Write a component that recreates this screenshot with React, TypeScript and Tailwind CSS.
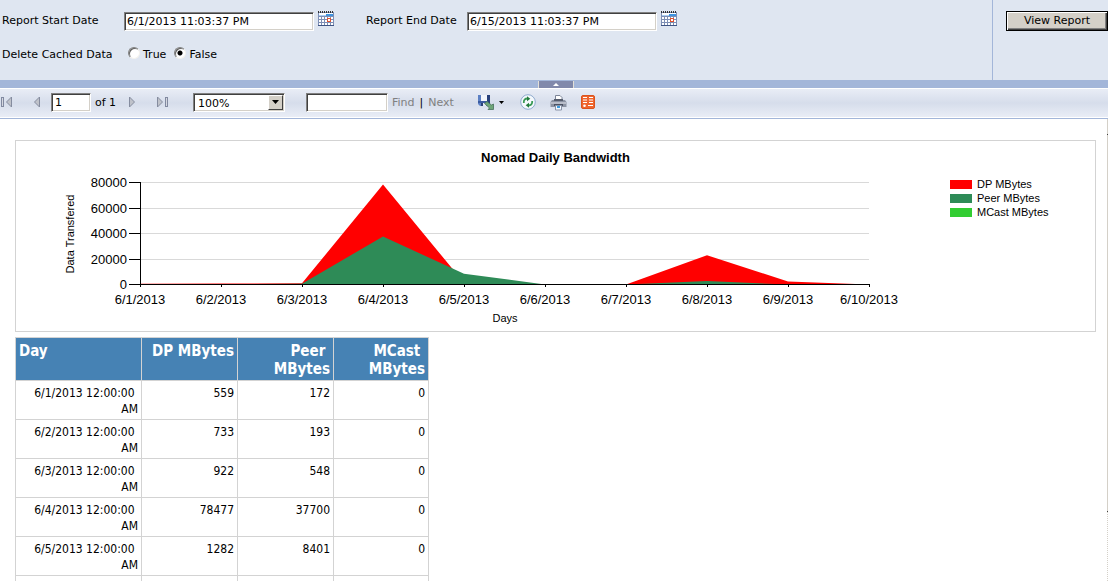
import type { ReactNode } from "react";

const SUNKEN =
  "bg-white border border-t-[#808080] border-l-[#808080] border-r-white border-b-white shadow-[inset_1px_1px_0_#404040,inset_-1px_-1px_0_#d4d0c8] rounded-none outline-none";

const rows = [
  { day: "6/1/2013 12:00:00 AM", dp: 559, peer: 172, mcast: 0 },
  { day: "6/2/2013 12:00:00 AM", dp: 733, peer: 193, mcast: 0 },
  { day: "6/3/2013 12:00:00 AM", dp: 922, peer: 548, mcast: 0 },
  { day: "6/4/2013 12:00:00 AM", dp: 78477, peer: 37700, mcast: 0 },
  { day: "6/5/2013 12:00:00 AM", dp: 1282, peer: 8401, mcast: 0 },
];

const series = {
  dp: [559, 733, 922, 78477, 1282, 0, 0, 23000, 2300, 0],
  peer: [172, 193, 548, 37700, 8401, 0, 0, 2700, 0, 0],
};

const legend = [
  { label: "DP MBytes", color: "bg-[#ff0000]" },
  { label: "Peer MBytes", color: "bg-[#2e8b57]" },
  { label: "MCast MBytes", color: "bg-[#32cd32]" },
];

function CalendarIcon() {
  return (
    <svg width="16" height="16" viewBox="0 0 16 16" shapeRendering="crispEdges">
      <rect x="0" y="1" width="16" height="14" fill="#7e8fb5" />
      <rect x="1" y="2" width="14" height="3" fill="#ffffff" />
      <rect x="1" y="4" width="7" height="1" fill="#a9cdf2" />
      <rect x="8" y="3" width="7" height="2" fill="#3f94e0" />
      {[6, 9, 12].map((y) =>
        [1, 4, 7, 10, 13].map((x) => <rect key={`${x}-${y}`} x={x} y={y} width="2" height="2" fill="#ffffff" />)
      )}
      <rect x="9" y="7" width="4" height="4" fill="#e0522f" />
      <rect x="10" y="8" width="2" height="2" fill="#ffffff" />
      {[0, 2, 4, 6, 8, 10, 12, 14].map((x) => (
        <rect key={x} x={x} y="0" width="1" height="2" fill="#333333" />
      ))}
      <rect x="0" y="14" width="16" height="1" fill="#3f5484" />
    </svg>
  );
}

function PageArrow({ flip = false, bar = false }: { flip?: boolean; bar?: boolean }) {
  return (
    <svg width="12" height="12" viewBox="0 0 12 12" className={flip ? "-scale-x-100" : ""}>
      {bar && <rect x="1.5" y="1.5" width="2" height="9" fill="#d5d8e0" stroke="#8189a0" strokeWidth="1" />}
      <path d="M11.5 1 V11 L6.500 6 Z" fill="#bfc2ca" stroke="#858c9f" strokeWidth="1" />
    </svg>
  );
}

function SaveIcon() {
  return (
    <svg width="17" height="17" viewBox="0 0 17 17">
      <path d="M0 1 H12 V12 H2 L0 10 Z" fill="#5c80c4" />
      <rect x="3" y="1" width="6" height="6" fill="#f3f6fc" />
      <rect x="9" y="1" width="3" height="9" fill="#27407c" />
      <rect x="0" y="7" width="10" height="2" fill="#3a5a9f" />
      <rect x="3" y="9" width="5" height="3" fill="#e3e8f2" />
      <rect x="3" y="9" width="2" height="3" fill="#2b4277" />
      <path d="M6.500 9.500 L9 7.500 L13.500 11 L15.500 10 V15.500 H10 L11.500 14 Z" fill="#6ea678" stroke="#47705c" strokeWidth="0.8" />
    </svg>
  );
}

function RefreshIcon() {
  return (
    <svg width="16" height="16" viewBox="0 0 16 16">
      <circle cx="8" cy="8" r="7.300" fill="#f4f8fc" stroke="#8fabcf" />
      <path d="M3.800 9 C3.500 6 5 4.500 7.500 4.500" fill="none" stroke="#3a9a56" strokeWidth="1.800" />
      <path d="M7 2.300 L10.300 4.800 L7 7.200 Z" fill="#237a3c" />
      <path d="M12.200 7 C12.500 10 11 11.500 8.500 11.500" fill="none" stroke="#3a9a56" strokeWidth="1.800" />
      <path d="M9 13.700 L5.700 11.200 L9 8.800 Z" fill="#237a3c" />
    </svg>
  );
}

function PrintIcon() {
  return (
    <svg width="17" height="17" viewBox="0 0 17 17">
      <path d="M5.500 6 V1.500 H10 L12 3.500 V6" fill="#ffffff" stroke="#7c8598" />
      <path d="M2 6 H15 L16.500 8 V13 H0.500 V8 Z" fill="#8c93a3" />
      <rect x="4" y="5" width="9" height="2" fill="#555c6c" />
      <rect x="1" y="8" width="15" height="2" fill="#b9bdc9" />
      <rect x="4" y="10" width="9" height="2" fill="#4c5262" />
      <path d="M5.500 11.500 H11.500 V16 H5.500 Z" fill="#f5f9ff" stroke="#8a94a8" />
      <rect x="7" y="12" width="3" height="2" fill="#3f9bdc" />
    </svg>
  );
}

function FeedIcon() {
  return (
    <svg width="14" height="14" viewBox="0 0 14 14">
      <rect x="0.500" y="0.500" width="13" height="13" rx="1.500" fill="#f0642c" stroke="#d9541f" />
      <path d="M2 2.500 H6 M2 5 H6 M2 7.500 H6 M8 2.500 H12 M8 5 H12 M8 7.500 H12 M7 10.500 H12" stroke="#ffffff" strokeWidth="1.200" />
      <circle cx="3.500" cy="10.700" r="1.300" fill="#ffffff" />
    </svg>
  );
}

function IconButton({ label, children }: { label: string; children: ReactNode }) {
  return (
    <button type="button" aria-label={label} className="flex shrink-0 items-center">
      {children}
    </button>
  );
}

function DateField({ id, label, value, labelClass }: { id: string; label: string; value: string; labelClass: string }) {
  return (
    <div className="flex items-center">
      <label htmlFor={id} className={labelClass}>
        {label}
      </label>
      <input id={id} defaultValue={value} className={`${SUNKEN} h-[19px] w-[190px] px-[2px]`} />
      <button type="button" aria-label={`Pick ${label}`} className="mb-1 ml-1">
        <CalendarIcon />
      </button>
    </div>
  );
}

function RadioOption({ label, checked = false }: { label: string; checked?: boolean }) {
  return (
    <label className="flex items-center gap-[3px]">
      <input
        type="radio"
        name="deleteCached"
        defaultChecked={checked}
        className="mb-1 size-3 appearance-none rounded-full border border-t-[#808080] border-r-[#f4f2ee] border-b-[#f4f2ee] border-l-[#808080] bg-white shadow-[inset_1px_1px_0_#606060] checked:bg-[radial-gradient(circle,#000_2px,#fff_3px)]"
      />
      {label}
    </label>
  );
}

function BandwidthChart() {
  const left = 124;
  const base = 114;
  const step = 81;
  const px = (i: number) => left + i * step;
  const py = (v: number) => base - (v / 80000) * 102;
  const area = (values: number[]) =>
    `M${left} ${base + 0.5} ${values.map((v, i) => `L${px(i)} ${py(v) + 0.5}`).join(" ")} L${px(9)} ${base + 0.5} Z`;

  return (
    <svg
      viewBox="0 0 890 161"
      className="mt-[2px] w-[890px] shrink-0 font-['Liberation_Sans',Arial,sans-serif]"
      role="img"
      aria-label="Nomad Daily Bandwidth"
    >
      {[20000, 40000, 60000, 80000].map((v) => (
        <line key={v} x1={left} x2={px(9)} y1={Math.round(py(v)) + 0.5} y2={Math.round(py(v)) + 0.5} stroke="#d9d9d9" />
      ))}
      <path d={area(series.dp)} fill="#ff0000" />
      <path d={area(series.peer)} fill="#2e8b57" />

      {/* Axes */}
      <path d={`M${left + 0.5} 12 V${base + 2} M${left - 11} ${base + 0.5} H${px(9) + 1}`} stroke="#000000" fill="none" />
      {[0, 20000, 40000, 60000, 80000].map((v) => (
        <g key={v}>
          <line x1={left - 11} x2={left} y1={Math.round(py(v)) + 0.5} y2={Math.round(py(v)) + 0.5} stroke="#000000" />
          <text x={left - 13} y={Math.round(py(v)) + 5} textAnchor="end" fontSize="13">
            {v}
          </text>
        </g>
      ))}
      {series.dp.map((_, i) => (
        <g key={i}>
          <line x1={px(i) + 0.5} x2={px(i) + 0.5} y1={base} y2={base + 3} stroke="#000000" />
          <text x={px(i)} y={base + 20} textAnchor="middle" fontSize="13">
            {`6/${i + 1}/2013`}
          </text>
        </g>
      ))}
      <text x="489" y="152" textAnchor="middle" fontSize="11">
        Days
      </text>
      <text x="58" y="64" textAnchor="middle" fontSize="11" transform="rotate(-90 58 64)">
        Data Transfered
      </text>
    </svg>
  );
}

export default function App() {
  return (
    <div className="flex h-screen flex-col overflow-hidden bg-white font-['DejaVu_Sans',Verdana,sans-serif] text-[11px] leading-4 text-black">
      {/* Report parameters */}
      <div className="flex shrink-0 bg-[#dfe6f1]">
        <div className="flex h-20 flex-1 flex-col gap-4 border-r border-[#a3b6d9] pt-[11px] pl-[2px]">
          <div className="flex gap-8">
            <DateField id="start" label="Report Start Date" value="6/1/2013 11:03:37 PM" labelClass="w-[122px]" />
            <DateField id="end" label="Report End Date" value="6/15/2013 11:03:37 PM" labelClass="w-[101px]" />
          </div>
          <fieldset className="flex items-center">
            <legend className="float-left w-[126px]">Delete Cached Data</legend>
            <div className="flex gap-2">
              <RadioOption label="True" />
              <RadioOption label="False" checked />
            </div>
          </fieldset>
        </div>
        <div className="w-[115px] pt-[11px] pl-[13px]">
          <button
            type="button"
            className="h-5 w-full border border-black bg-[#d4d0c8] shadow-[inset_1px_1px_0_#fff,inset_-1px_-1px_0_#404040,inset_-2px_-2px_0_#808080]"
          >
            View Report
          </button>
        </div>
      </div>

      {/* Splitter */}
      <div className="flex h-2 shrink-0 items-end justify-center bg-[#a3b6d9] pl-1">
        <button
          type="button"
          aria-label="Hide parameters"
          className="flex h-[7px] w-9 items-center justify-center border-x border-[#e3e0d8] bg-[#8189ab]"
        >
          <svg width="6" height="3" viewBox="0 0 6 3">
            <path d="M0 3 L3 0 L6 3 Z" fill="#ffffff" />
          </svg>
        </button>
      </div>

      {/* Toolbar */}
      <div className="shrink-0 border-b border-[#a3b6d9]">
        <div className="flex h-[30px] items-center border-y border-white bg-linear-to-b from-[#e9edf6] via-[#d6ddeb] to-[#e9edf6] pb-[2px]">
          <div className="flex w-[51px] items-center gap-4">
            <IconButton label="First page">
              <PageArrow bar />
            </IconButton>
            <IconButton label="Previous page">
              <PageArrow />
            </IconButton>
          </div>
          <input id="page" aria-label="Current page" defaultValue="1" className={`${SUNKEN} h-[19px] w-10 px-[3px] pt-px`} />
          <label htmlFor="page" className="ml-1 w-[34px] pt-[2px]">
            of 1
          </label>
          <div className="flex w-16 items-center gap-4">
            <IconButton label="Next page">
              <PageArrow flip />
            </IconButton>
            <IconButton label="Last page">
              <PageArrow flip bar />
            </IconButton>
          </div>
          <div className="relative">
            <select aria-label="Zoom" className={`${SUNKEN} block h-[19px] w-[92px] appearance-none pt-[2px] pl-[4px]`}>
              <option>100%</option>
            </select>
            <span className="pointer-events-none absolute top-[2px] right-[2px] flex h-[15px] w-[15px] items-center justify-center border border-t-white border-r-[#404040] border-b-[#404040] border-l-white bg-[#d4d0c8]">
              <svg width="7" height="4" viewBox="0 0 7 4">
                <path d="M0 0 H7 L3.500 4 Z" />
              </svg>
            </span>
          </div>
          <input aria-label="Find text" className={`${SUNKEN} ml-[21px] h-[19px] w-[82px] px-[2px]`} />
          <div className="ml-1 flex w-[86px] gap-[5px] pt-[2px] text-[#808080]">
            <button type="button">Find</button>
            <span className="text-black">|</span>
            <button type="button">Next</button>
          </div>
          <button type="button" aria-label="Export" className="flex items-center gap-1">
            <SaveIcon />
            <svg width="5" height="3" viewBox="0 0 5 3">
              <path d="M0 0 H5 L2.500 3 Z" />
            </svg>
          </button>
          <div className="ml-4 flex items-center gap-[14px]">
            <IconButton label="Refresh">
              <RefreshIcon />
            </IconButton>
            <IconButton label="Print">
              <PrintIcon />
            </IconButton>
            <IconButton label="Export to data feed">
              <FeedIcon />
            </IconButton>
          </div>
        </div>
      </div>

      {/* Report body */}
      <div className="flex min-h-0 flex-1">
        <main className="flex-1 overflow-hidden pt-[21px] pr-[11px] pl-[15px]">
          <section className="border border-[#d3d3d3] font-['Liberation_Sans',Arial,sans-serif]">
            <h1 className="pt-[7px] text-center text-[13px] leading-5 font-bold">Nomad Daily Bandwidth</h1>
            <div className="flex justify-between">
              <BandwidthChart />
              <ul className="mt-[9px] w-[145px] text-[11px] leading-[14px]">
                {legend.map((item) => (
                  <li key={item.label} className="flex items-center gap-[5px]">
                    <span className={`h-[9px] w-[22px] ${item.color}`} />
                    {item.label}
                  </li>
                ))}
              </ul>
            </div>
          </section>

          <table className="mt-[5px] w-[414px] table-fixed border-collapse text-right font-['DejaVu_Sans_Condensed',Tahoma,sans-serif] text-[12px] leading-4 whitespace-break-spaces">
            <thead className="bg-[#4682b4] text-[15px] leading-[18px] text-white">
              <tr className="h-[43px] align-top">
                <th className="w-[126px] border border-[#d3d3d3] px-[3px] pt-1 text-left">Day</th>
                <th className="w-24 border border-[#d3d3d3] px-[3px] pt-1">DP MBytes</th>
                <th className="w-24 border border-[#d3d3d3] px-[3px] pt-1">Peer MBytes</th>
                <th className="border border-[#d3d3d3] px-[3px] pt-1">MCast MBytes</th>
              </tr>
            </thead>
            <tbody>
              {rows.map((row) => (
                <tr key={row.day} className="h-[39px] align-top">
                  <td className="border border-[#d3d3d3] px-[3px] pt-1">{row.day}</td>
                  <td className="border border-[#d3d3d3] px-[3px] pt-1">{row.dp}</td>
                  <td className="border border-[#d3d3d3] px-[3px] pt-1">{row.peer}</td>
                  <td className="border border-[#d3d3d3] px-[3px] pt-1">{row.mcast}</td>
                </tr>
              ))}
              <tr className="h-[39px]">
                <td className="border border-[#d3d3d3]" />
                <td className="border border-[#d3d3d3]" />
                <td className="border border-[#d3d3d3]" />
                <td className="border border-[#d3d3d3]" />
              </tr>
            </tbody>
          </table>
        </main>

        {/* Scroll bar edge */}
        <div className="flex w-px flex-col bg-[#d4d0c8]">
          <div className="mt-[15px] h-px bg-[#404040]" />
          <div className="flex-1" />
          <div className="h-px bg-[#404040]" />
          <div className="h-[69px] bg-[repeating-linear-gradient(#d4d0c8_0_1px,#fff_1px_2px)]" />
        </div>
      </div>
    </div>
  );
}
